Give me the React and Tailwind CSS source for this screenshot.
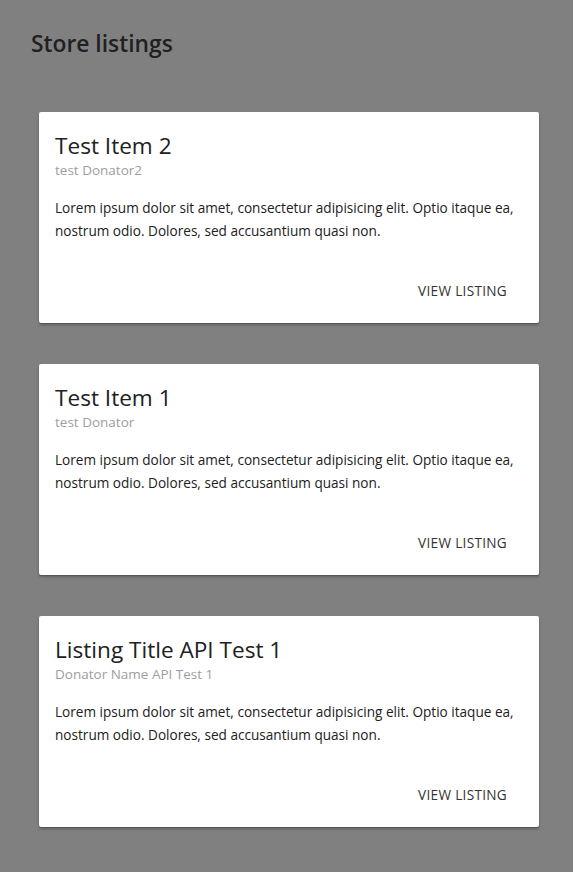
import React from 'react';

const listings = [
  { title: 'Test Item 2', donator: 'test Donator2' },
  { title: 'Test Item 1', donator: 'test Donator' },
  { title: 'Listing Title API Test 1', donator: 'Donator Name API Test 1' },
];

const body =
  'Lorem ipsum dolor sit amet, consectetur adipisicing elit. Optio itaque ea, nostrum odio. Dolores, sed accusantium quasi non.';

const ListingCard = ({ title, donator }) => (
  <div className="bg-white rounded-[2px] shadow-[0_2px_3px_rgba(0,0,0,0.25),0_1px_1px_rgba(0,0,0,0.15)] h-[211px] flex flex-col">
    <div className="px-4 pt-[19px]">
      <h2 className="text-[22.6px] leading-[30px] text-[#212121] font-normal">{title}</h2>
      <p className="text-[13.5px] leading-[19px] text-[#9e9e9e]">{donator}</p>
    </div>
    <p className="px-4 pt-[16px] text-[13.6px] leading-[23px] text-[#212121]">{body}</p>
    <div className="mt-auto flex justify-end px-4 pb-[14px]">
      <button className="h-9 px-4 text-[13.6px] uppercase text-[#333] tracking-[0.3px]">
        View listing
      </button>
    </div>
  </div>
);

const App = () => {
  return (
    <div
      className="min-h-[872px] bg-[#808080] pt-[28px] pb-[45px]"
      style={{ fontFamily: '"Open Sans", "Noto Sans", sans-serif' }}
    >
      <h1 className="ml-[31px] text-[22.8px] leading-[32px] text-[#212121] font-semibold">Store listings</h1>
      <div className="mt-[52px] ml-[39px] w-[500px] flex flex-col gap-[41px]">
        {listings.map((l) => (
          <ListingCard key={l.title} {...l} />
        ))}
      </div>
    </div>
  );
};

export default App;
